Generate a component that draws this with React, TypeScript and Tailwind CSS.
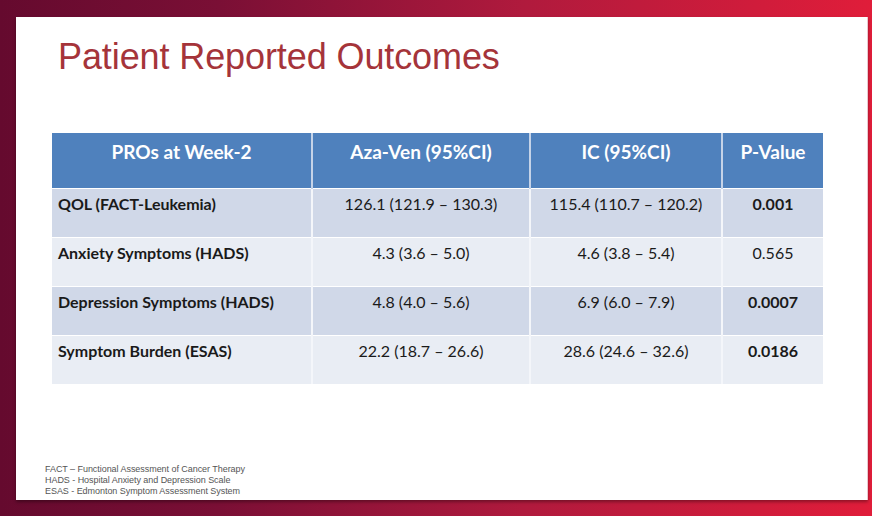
export default function App() {
  const rows = [
    { label: "QOL (FACT-Leukemia)", a: "126.1 (121.9 – 130.3)", b: "115.4 (110.7 – 120.2)", p: "0.001", bold: true },
    { label: "Anxiety Symptoms (HADS)", a: "4.3 (3.6 – 5.0)", b: "4.6 (3.8 – 5.4)", p: "0.565", bold: false },
    { label: "Depression Symptoms (HADS)", a: "4.8 (4.0 – 5.6)", b: "6.9 (6.0 – 7.9)", p: "0.0007", bold: true },
    { label: "Symptom Burden (ESAS)", a: "22.2 (18.7 – 26.6)", b: "28.6 (24.6 – 32.6)", p: "0.0186", bold: true },
  ];

  return (
    <div className="w-[872px] h-[516px] overflow-hidden bg-[linear-gradient(90deg,#650a2e_0%,#7a0f35_25%,#b01a3d_60%,#e01d3a_100%)] pt-[17px] pl-[16px] pr-[4px] pb-[16px]">
      <div className="w-full h-full bg-white flex flex-col shadow-[0_2px_3px_rgba(0,0,0,0.35)] border-r border-[#e8c8cf]">
        <h1 className="pl-[42px] pt-[20px] text-[36px] leading-[40px] text-[#a5343a] font-['Liberation_Sans',Arial,sans-serif] tracking-[-0.1px]">
          Patient Reported Outcomes
        </h1>

        <div className="pl-[36px] pt-[56px] font-['Lato','Noto_Sans',sans-serif]">
          <table className="border-collapse table-fixed w-[771px]">
            <colgroup>
              <col className="w-[260px]" />
              <col className="w-[218px]" />
              <col className="w-[192px]" />
              <col className="w-[101px]" />
            </colgroup>
            <thead>
              <tr className="bg-[#4f81bd] h-[55px] text-white text-[19px] font-bold">
                <th className="align-top pt-[5px] text-center border-r-2 border-[#c5d3e8]">PROs at Week-2</th>
                <th className="align-top pt-[5px] text-center border-r-2 border-[#c5d3e8]">Aza-Ven (95%CI)</th>
                <th className="align-top pt-[5px] text-center border-r-2 border-[#c5d3e8]">IC (95%CI)</th>
                <th className="align-top pt-[5px] text-center">P-Value</th>
              </tr>
            </thead>
            <tbody className="text-[16px] text-[#1a1a1a]">
              {rows.map((r, i) => (
                <tr
                  key={r.label}
                  className={`h-[49px] border-t border-white ${i % 2 === 0 ? "bg-[#d0d8e8]" : "bg-[#e9edf4]"}`}
                >
                  <td className="align-top pt-[3px] pl-[6px] font-bold border-r-2 border-[#f4f6fa]">{r.label}</td>
                  <td className="align-top pt-[3px] text-center border-r-2 border-[#f4f6fa]">{r.a}</td>
                  <td className="align-top pt-[3px] text-center border-r-2 border-[#f4f6fa]">{r.b}</td>
                  <td className={`align-top pt-[3px] text-center ${r.bold ? "font-bold" : ""}`}>{r.p}</td>
                </tr>
              ))}
            </tbody>
          </table>
        </div>

        <div className="mt-auto pl-[29px] pb-[3px] text-[9px] leading-[11px] text-[#555] font-['Liberation_Sans',Arial,sans-serif] tracking-[-0.05px]">
          <div>FACT – Functional Assessment of Cancer Therapy</div>
          <div>HADS - Hospital Anxiety and Depression Scale</div>
          <div>ESAS - Edmonton Symptom Assessment System</div>
        </div>
      </div>
    </div>
  );
}
